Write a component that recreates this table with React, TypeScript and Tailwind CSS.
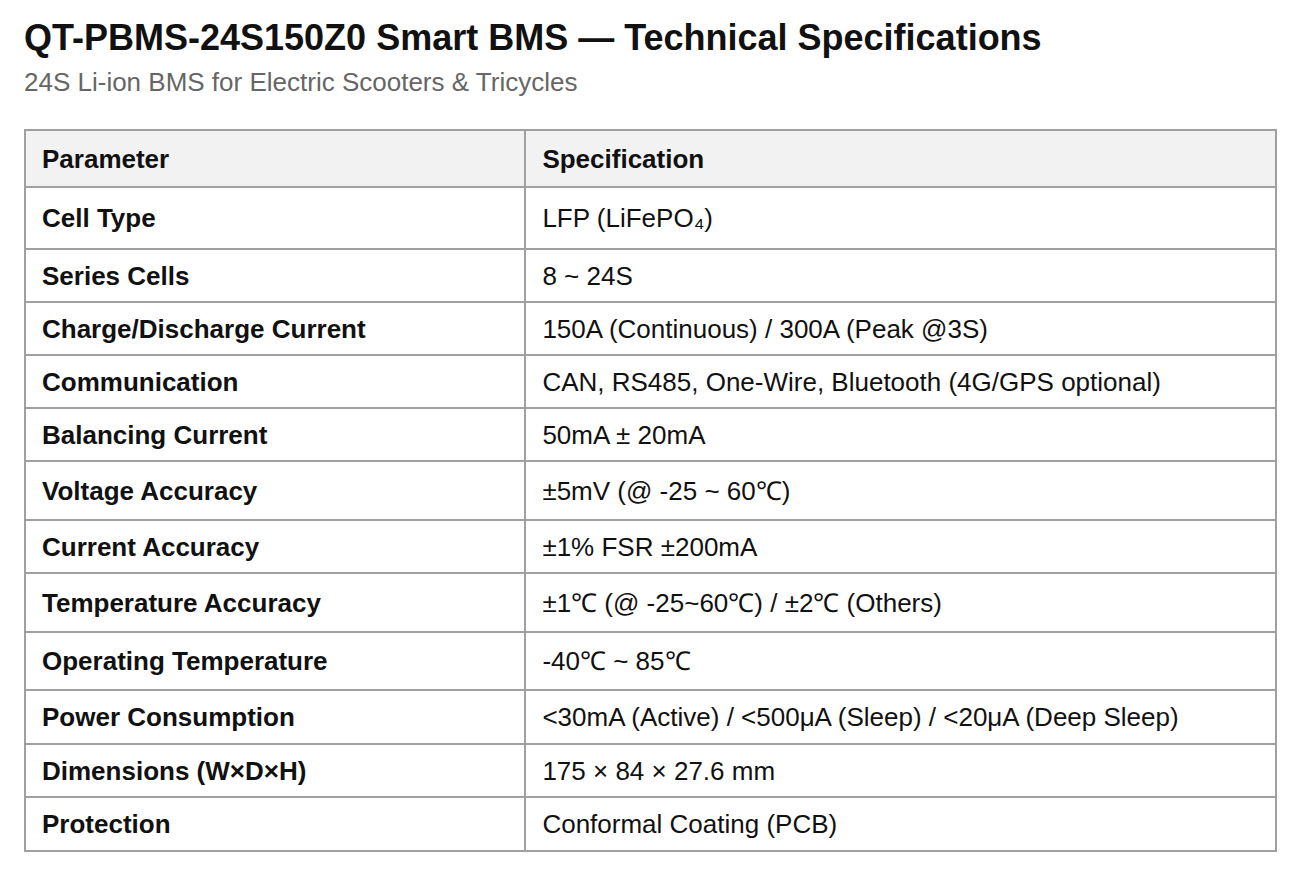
const rows: { name: string; value: string; h: number }[] = [
  { name: "Cell Type", value: "LFP (LiFePO₄)", h: 62 },
  { name: "Series Cells", value: "8 ~ 24S", h: 53 },
  { name: "Charge/Discharge Current", value: "150A (Continuous) / 300A (Peak @3S)", h: 53 },
  { name: "Communication", value: "CAN, RS485, One-Wire, Bluetooth (4G/GPS optional)", h: 53 },
  { name: "Balancing Current", value: "50mA ± 20mA", h: 53 },
  { name: "Voltage Accuracy", value: "±5mV (@ -25 ~ 60℃)", h: 59 },
  { name: "Current Accuracy", value: "±1% FSR ±200mA", h: 53 },
  { name: "Temperature Accuracy", value: "±1℃ (@ -25~60℃) / ±2℃ (Others)", h: 59 },
  { name: "Operating Temperature", value: "-40℃ ~ 85℃", h: 58 },
  { name: "Power Consumption", value: "<30mA (Active) / <500μA (Sleep) / <20μA (Deep Sleep)", h: 54 },
  { name: "Dimensions (W×D×H)", value: "175 × 84 × 27.6 mm", h: 53 },
  { name: "Protection", value: "Conformal Coating (PCB)", h: 54 },
];

export default function App() {
  return (
    <div className="min-h-screen bg-white px-6 pt-[17px] text-[#111] [font-family:'Liberation_Sans',Arial,sans-serif]">
      <h1 className="text-[36px] font-bold leading-[42px]">
        QT-PBMS-24S150Z0 Smart BMS — Technical Specifications
      </h1>
      <p className="mt-[8px] text-[26px] leading-[30px] text-[#666]">
        24S Li-ion BMS for Electric Scooters &amp; Tricycles
      </p>

      <table className="mt-[32px] w-[1253px] border-collapse text-[26px] leading-[30px]">
        <thead>
          <tr className="h-[57px] bg-[#f2f2f2]">
            <th className="w-[40%] border-2 border-[#a0a0a0] px-4 text-left font-bold">Parameter</th>
            <th className="border-2 border-[#a0a0a0] px-4 text-left font-bold">Specification</th>
          </tr>
        </thead>
        <tbody>
          {rows.map((r) => (
            <tr key={r.name} style={{ height: r.h }}>
              <td className="border-2 border-[#a0a0a0] px-4 font-bold">{r.name}</td>
              <td className="border-2 border-[#a0a0a0] px-4">{r.value}</td>
            </tr>
          ))}
        </tbody>
      </table>
    </div>
  );
}
